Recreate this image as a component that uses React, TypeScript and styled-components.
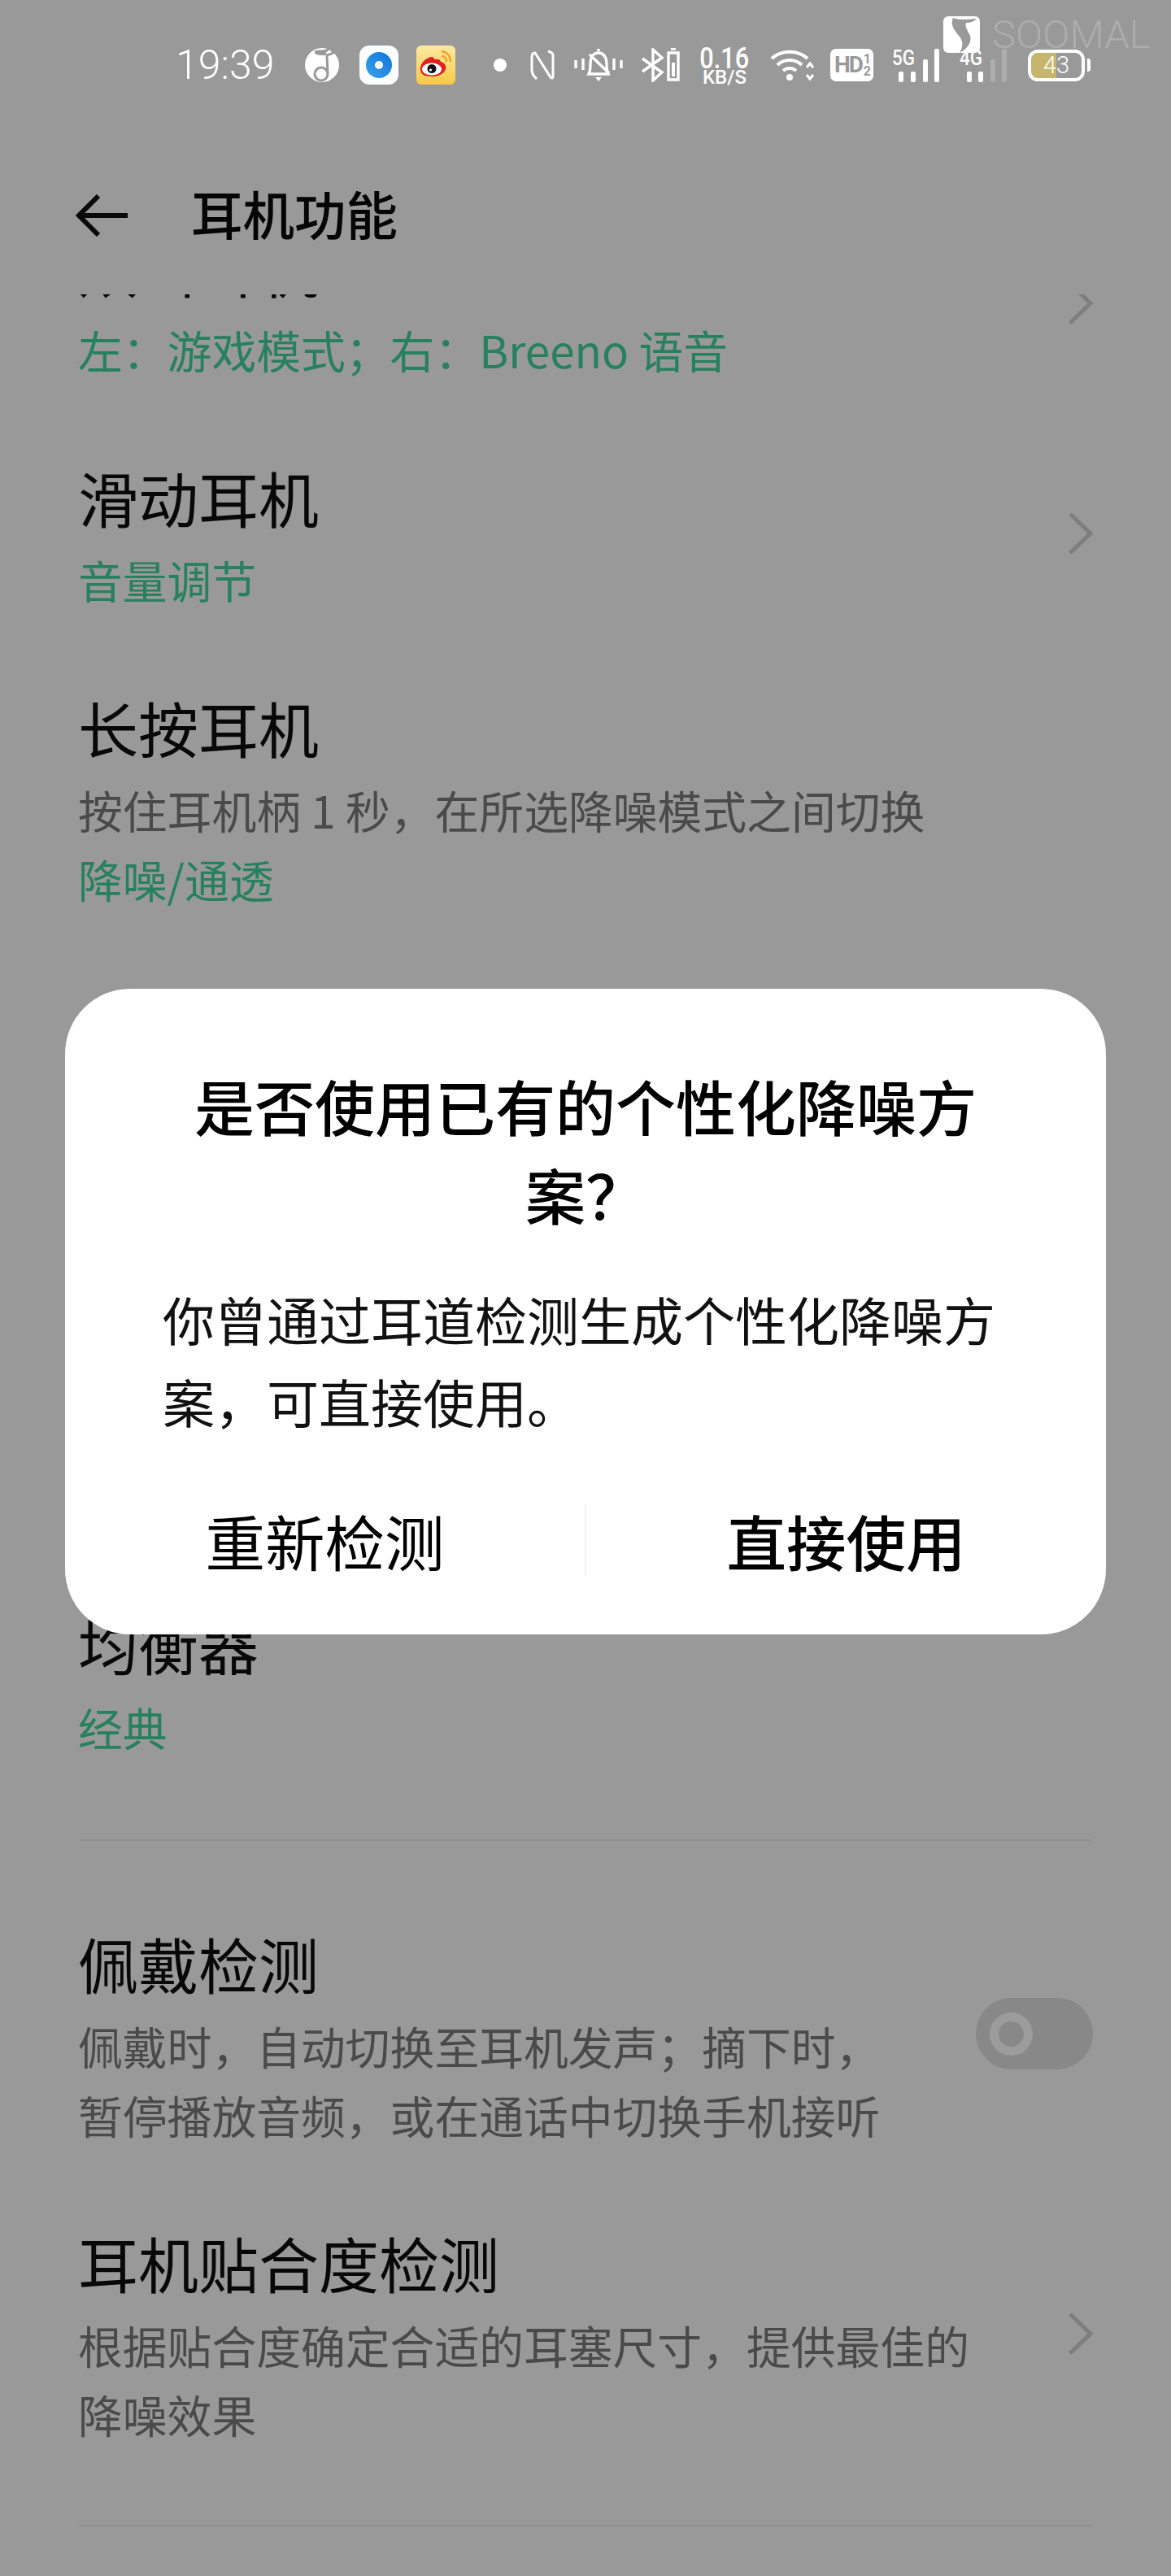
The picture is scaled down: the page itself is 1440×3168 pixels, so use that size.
import styled, { createGlobalStyle } from "styled-components"

const GlobalStyle = createGlobalStyle`
    html, body {
        margin: 0;
        padding: 0;
        background: #999;
    }
    * {
        box-sizing: border-box;
    }
`

const FONT = `"Noto Sans CJK SC", "Noto Sans", sans-serif`
const LATIN = `Roboto, "Noto Sans", sans-serif`

export default function App() {
    return <>
        <GlobalStyle />
        <Page>
            <StatusBar>
                <Time>19:39</Time>
                <MusicIcon />
                <MapIcon />
                <WeiboIcon />
                <Dot />
                <NfcIcon />
                <MuteIcon />
                <BluetoothIcon />
                <Speed>
                    <SpeedValue>0.16</SpeedValue>
                    <SpeedUnit>KB/S</SpeedUnit>
                </Speed>
                <WifiIcon />
                <HdBadge>
                    <HdText>HD</HdText>
                    <HdFraction><span>1</span><span>2</span></HdFraction>
                </HdBadge>
                <Signal label="5G" gap={23} faded={false} />
                <Signal label="4G" gap={25} faded={true} />
                <Battery>
                    <BatteryBody>43</BatteryBody>
                    <BatteryTip />
                </Battery>
            </StatusBar>

            <Header>
                <BackArrow width="64" height="52" viewBox="0 0 64 52" fill="none" stroke="#0a0a0a" strokeWidth="6">
                    <path d="M28 2 L4 26 L28 50 M4 26 H64" />
                </BackArrow>
                <Title>耳机功能</Title>
            </Header>

            <List>
                <Scroller>
                    <Row>
                        <RowText>
                            <RowTitle>双击耳机</RowTitle>
                            <Value>左：游戏模式；右：Breeno 语音</Value>
                        </RowText>
                        <Chevron />
                    </Row>
                    <Row>
                        <RowText>
                            <RowTitle>滑动耳机</RowTitle>
                            <Value>音量调节</Value>
                        </RowText>
                        <Chevron />
                    </Row>
                    <Row>
                        <RowText>
                            <RowTitle>长按耳机</RowTitle>
                            <Hint>按住耳机柄 1 秒，在所选降噪模式之间切换</Hint>
                            <Value>降噪/通透</Value>
                        </RowText>
                    </Row>

                    <HiddenGap />

                    <Row $bottom={96}>
                        <RowText>
                            <RowTitle>均衡器</RowTitle>
                            <Value>经典</Value>
                        </RowText>
                    </Row>
                    <Divider />
                    <Row $top={100}>
                        <RowText>
                            <RowTitle>佩戴检测</RowTitle>
                            <Hint>佩戴时，自动切换至耳机发声；摘下时，<br />暂停播放音频，或在通话中切换手机接听</Hint>
                        </RowText>
                        <Toggle><ToggleKnob /></Toggle>
                    </Row>
                    <Row $bottom={94}>
                        <RowText>
                            <RowTitle>耳机贴合度检测</RowTitle>
                            <Hint>根据贴合度确定合适的耳塞尺寸，提供最佳的<br />降噪效果</Hint>
                        </RowText>
                        <Chevron />
                    </Row>
                    <Divider />
                </Scroller>
            </List>

            <Dialog>
                <DialogTitle>是否使用已有的个性化降噪方案？</DialogTitle>
                <DialogBody>你曾通过耳道检测生成个性化降噪方案，可直接使用。</DialogBody>
                <DialogActions>
                    <ActionButton>重新检测</ActionButton>
                    <ActionDivider />
                    <ActionButton $primary>直接使用</ActionButton>
                </DialogActions>
            </Dialog>

            <Watermark>
                <svg width="45" height="45" viewBox="0 0 45 45">
                    <rect width="45" height="45" rx="6" fill="#fff" />
                    <path fill="#999" d="M12 2 C20 5 28 4 41 3 C38 6 34 8 28 8 C26 12 30 18 33 24 C35 32 30 40 20 45 C24 38 25 32 20 25 C14 18 8 10 12 2 Z" />
                </svg>
                <WatermarkText>SOOMAL</WatermarkText>
            </Watermark>
        </Page>
    </>
}

function MusicIcon() {
    return <Glyph $gap={39} width="42" height="42" viewBox="0 0 42 42" fill="none">
        <circle cx="21" cy="21" r="21" fill="#fff" />
        <path d="M12 5 C18 3 22 5 27 3 L31 0 L35 6 C31 8 29 8 27 9 L28 31" stroke="#999" strokeWidth="3" />
        <circle cx="20" cy="32" r="8" stroke="#999" strokeWidth="3" />
        <path d="M13 5 C19 3 23 5 26 3 L26 9 C21 9 17 9 13 8 Z" fill="#999" />
    </Glyph>
}

function MapIcon() {
    return <Glyph $gap={25} width="48" height="48" viewBox="0 0 48 48">
        <defs>
            <linearGradient id="disc" x1="0" y1="1" x2="1" y2="0">
                <stop offset="0" stopColor="#3aa1ee" />
                <stop offset="1" stopColor="#0f74d8" />
            </linearGradient>
        </defs>
        <rect width="48" height="48" rx="12" fill="#fbfdff" />
        <circle cx="24" cy="24" r="16" fill="url(#disc)" />
        <circle cx="24" cy="24" r="5" fill="#fff" />
    </Glyph>
}

function WeiboIcon() {
    return <Glyph $gap={22} width="48" height="48" viewBox="0 0 48 48" fill="none">
        <defs>
            <linearGradient id="tile" x1="0" y1="0" x2="0" y2="1">
                <stop offset="0" stopColor="#fde9a2" />
                <stop offset="1" stopColor="#f9c944" />
            </linearGradient>
        </defs>
        <rect width="48" height="48" rx="6" fill="url(#tile)" />
        <path d="M31 7 C38 8 42 13 42 20 M31 13 C35 13 37 16 37 20" stroke="#eea52c" strokeWidth="2.6" />
        <path d="M5 30 C4 23 10 17 15 15 C19 13 22 14 22 17 C26 16 30 17 30 20 C35 21 37 25 36 29 C34 35 26 39 18 38 C10 38 5 35 5 30 Z" fill="#e0201c" />
        <ellipse cx="19" cy="29" rx="12" ry="7.5" fill="#fff" />
        <circle cx="19" cy="28.5" r="5.5" fill="#111" />
        <circle cx="17.5" cy="30" r="1.6" fill="#fff" />
    </Glyph>
}

function NfcIcon() {
    return <Glyph $gap={29} width="30" height="36" viewBox="0 0 30 36" fill="none" stroke="#fff" strokeWidth="3">
        <path d="M8 35 C3 31 2 27 2 24 V8 C2 4 4 3 6 3 L25 33 C27 35 28 34 28 32 V6 C28 4 26 2 22 1" />
    </Glyph>
}

function MuteIcon() {
    return <Glyph $gap={23} width="62" height="42" viewBox="0 0 62 42" fill="none" stroke="#fff" strokeWidth="3.4">
        <path d="M3 15 V25 M12 13 V27 M50 13 V27 M59 15 V25" />
        <path d="M31 1 V4 M19 32 H43 C41 28 41 26 41 20 C41 11 37 6 31 6 C25 6 21 11 21 20 C21 26 21 28 19 32 Z M20 8 L44 31" />
        <path d="M27 36 H35 L31 41 Z" fill="#fff" stroke="none" />
    </Glyph>
}

function BluetoothIcon() {
    return <Glyph $gap={22} width="47" height="42" viewBox="0 0 47 42" fill="none" stroke="#fff" strokeWidth="3.4">
        <path d="M1 13 L25 30 L14 40 V2 L25 12 L1 29" />
        <path d="M33 6 H45 V39 H33 Z M36 1 H42" />
        <path d="M39 18 V35" strokeWidth="4" />
    </Glyph>
}

function WifiIcon() {
    return <Glyph $gap={27} width="55" height="40" viewBox="0 0 55 40" fill="none" stroke="#fff" strokeWidth="4">
        <path d="M2 12 C14 1 34 1 46 12 M9 20 C17 12 31 12 39 20 M16 27 C21 23 27 23 32 27" />
        <circle cx="24" cy="35" r="4" fill="#fff" stroke="none" />
        <path d="M45 23 L49 18 L53 23 M45 32 L49 37 L53 32" strokeWidth="3" />
    </Glyph>
}

function Signal({ label, gap, faded }: { label: string; gap: number; faded: boolean }) {
    return <Glyph $gap={gap} width="58" height="42" viewBox="0 0 58 42">
        <text x="0" y="21" textLength="28" lengthAdjust="spacingAndGlyphs" fontFamily="Roboto" fontWeight="500" fontSize="25" fill="#fff">{label}</text>
        <rect x={faded ? 9 : 8} y="29" width="6" height="13" rx="2" fill="#fff" />
        <rect x="23" y="29" width="6" height="13" rx="2" fill="#fff" />
        <rect x="38" y="14" width="6" height="28" rx="2" fill="#fff" opacity={faded ? 0.2 : 1} />
        <rect x="52" y="1" width="6" height="41" rx="2" fill="#fff" opacity={faded ? 0.2 : 1} />
    </Glyph>
}

function Chevron() {
    return <ChevronIcon width="32" height="54" viewBox="0 0 32 54" fill="none" stroke="#7e7e7e" strokeWidth="5">
        <path d="M3 3 L28 27 L3 51" />
    </ChevronIcon>
}

const Page = styled.div`
    position: relative;
    width: 1440px;
    height: 3168px;
    overflow: hidden;
    background: #999;
    font-family: ${FONT};
    display: flex;
    flex-direction: column;
`

const StatusBar = styled.div`
    height: 160px;
    padding-left: 216px;
    display: flex;
    align-items: center;
    color: #fff;
`

const Time = styled.div`
    width: 120px;
    font-family: ${LATIN};
    font-weight: 300;
    font-size: 50px;
    line-height: 50px;
    white-space: nowrap;
`

const Glyph = styled.svg<{ $gap: number }>`
    flex: none;
    display: block;
    margin-left: ${props => props.$gap}px;
`

const Dot = styled.div`
    width: 16px;
    height: 16px;
    margin-left: 47px;
    border-radius: 50%;
    background: #fff;
`

const Speed = styled.div`
    width: 58px;
    margin-left: 26px;
    display: flex;
    flex-direction: column;
    align-items: center;
    font-family: ${LATIN};
    font-weight: 500;
    white-space: nowrap;
`

const SpeedValue = styled.div`
    font-size: 37px;
    line-height: 29px;
    transform: scaleX(0.83);
`

const SpeedUnit = styled.div`
    font-size: 24px;
    line-height: 18px;
`

const HdBadge = styled.div`
    width: 53px;
    height: 40px;
    margin-left: 19px;
    padding: 0 3px 0 5px;
    border-radius: 7px;
    background: #fff;
    color: #999;
    display: flex;
    align-items: center;
    justify-content: space-between;
    font-family: ${LATIN};
    font-weight: 700;
`

const HdText = styled.span`
    font-size: 28px;
    line-height: 28px;
    letter-spacing: -2px;
`

const HdFraction = styled.span`
    display: flex;
    flex-direction: column;
    align-items: center;
    font-size: 16px;
    line-height: 15px;
`

const Battery = styled.div`
    margin-left: 26px;
    display: flex;
    align-items: center;
    gap: 3px;
`

const BatteryBody = styled.div`
    width: 70px;
    height: 39px;
    border: 4px solid #fff;
    border-radius: 12px;
    background: linear-gradient(90deg, #c6b66d 31px, transparent 31px);
    display: flex;
    align-items: center;
    justify-content: center;
    font-family: ${LATIN};
    font-weight: 300;
    font-size: 29px;
    line-height: 29px;
`

const BatteryTip = styled.div`
    width: 4px;
    height: 16px;
    border-radius: 0 3px 3px 0;
    background: #fff;
`

const Header = styled.div`
    flex: none;
    height: 202px;
    padding-left: 93px;
    display: flex;
    align-items: center;
    gap: 78px;
`

const BackArrow = styled.svg`
    flex: none;
    margin-top: 8px;
`

const Title = styled.div`
    font-size: 63.5px;
    line-height: 80px;
    font-weight: 500;
    color: #050505;
`

const List = styled.div`
    flex: 1;
    overflow: hidden;
    padding: 0 97px 0 96px;
`

const Scroller = styled.div`
    margin-top: -84px;
`

const Row = styled.div<{ $top?: number; $bottom?: number }>`
    display: flex;
    align-items: center;
    justify-content: space-between;
    padding: ${props => props.$top ?? 0}px 0 ${props => props.$bottom ?? 89}px;
`

const RowText = styled.div`
    display: flex;
    flex-direction: column;
`

const RowTitle = styled.div`
    font-size: 74px;
    line-height: 100px;
    margin-bottom: 9px;
    color: #080808;
`

const Hint = styled.div`
    font-size: 54.8px;
    line-height: 85px;
    color: #4a4a4a;
`

const Value = styled.div`
    font-size: 54.8px;
    line-height: 85px;
    color: #27805f;
`

const ChevronIcon = styled.svg`
    flex: none;
    margin: 0 -2px 4px 0;
`

const HiddenGap = styled.div`
    height: 760px;
`

const Divider = styled.div`
    height: 2px;
    margin-left: 1px;
    background: #8f8f8f;
`

const Toggle = styled.div`
    flex: none;
    width: 144px;
    height: 88px;
    margin: 0 -1px 5px 0;
    padding-left: 17px;
    border-radius: 44px;
    background: #888;
    display: flex;
    align-items: center;
`

const ToggleKnob = styled.div`
    width: 53px;
    height: 53px;
    border: 11px solid #9c9c9c;
    border-radius: 50%;
`

const Dialog = styled.div`
    position: absolute;
    left: 80px;
    top: 1216px;
    width: 1280px;
    height: 794px;
    padding-top: 88px;
    border-radius: 80px;
    background: #fff;
    display: flex;
    flex-direction: column;
`

const DialogTitle = styled.div`
    padding: 0 140px;
    text-align: center;
    font-size: 74px;
    line-height: 109px;
    font-weight: 500;
    color: #000;
`

const DialogBody = styled.div`
    margin-top: 49px;
    padding: 0 120px;
    font-size: 64px;
    line-height: 101px;
    color: #111;
`

const DialogActions = styled.div`
    margin-top: 77px;
    height: 88px;
    display: flex;
    align-items: center;
`

const ActionButton = styled.div<{ $primary?: boolean }>`
    flex: 1;
    text-align: center;
    font-size: 73.5px;
    line-height: 88px;
    font-weight: ${props => props.$primary ? 500 : 400};
    color: #000;
`

const ActionDivider = styled.div`
    width: 2px;
    height: 88px;
    background: #f2f2f2;
`

const Watermark = styled.div`
    position: absolute;
    top: 20px;
    left: 1160px;
    display: flex;
    align-items: center;
    gap: 15px;
`

const WatermarkText = styled.div`
    font-family: ${LATIN};
    font-weight: 300;
    font-size: 49px;
    line-height: 45px;
    color: #adadad;
    white-space: nowrap;
`
